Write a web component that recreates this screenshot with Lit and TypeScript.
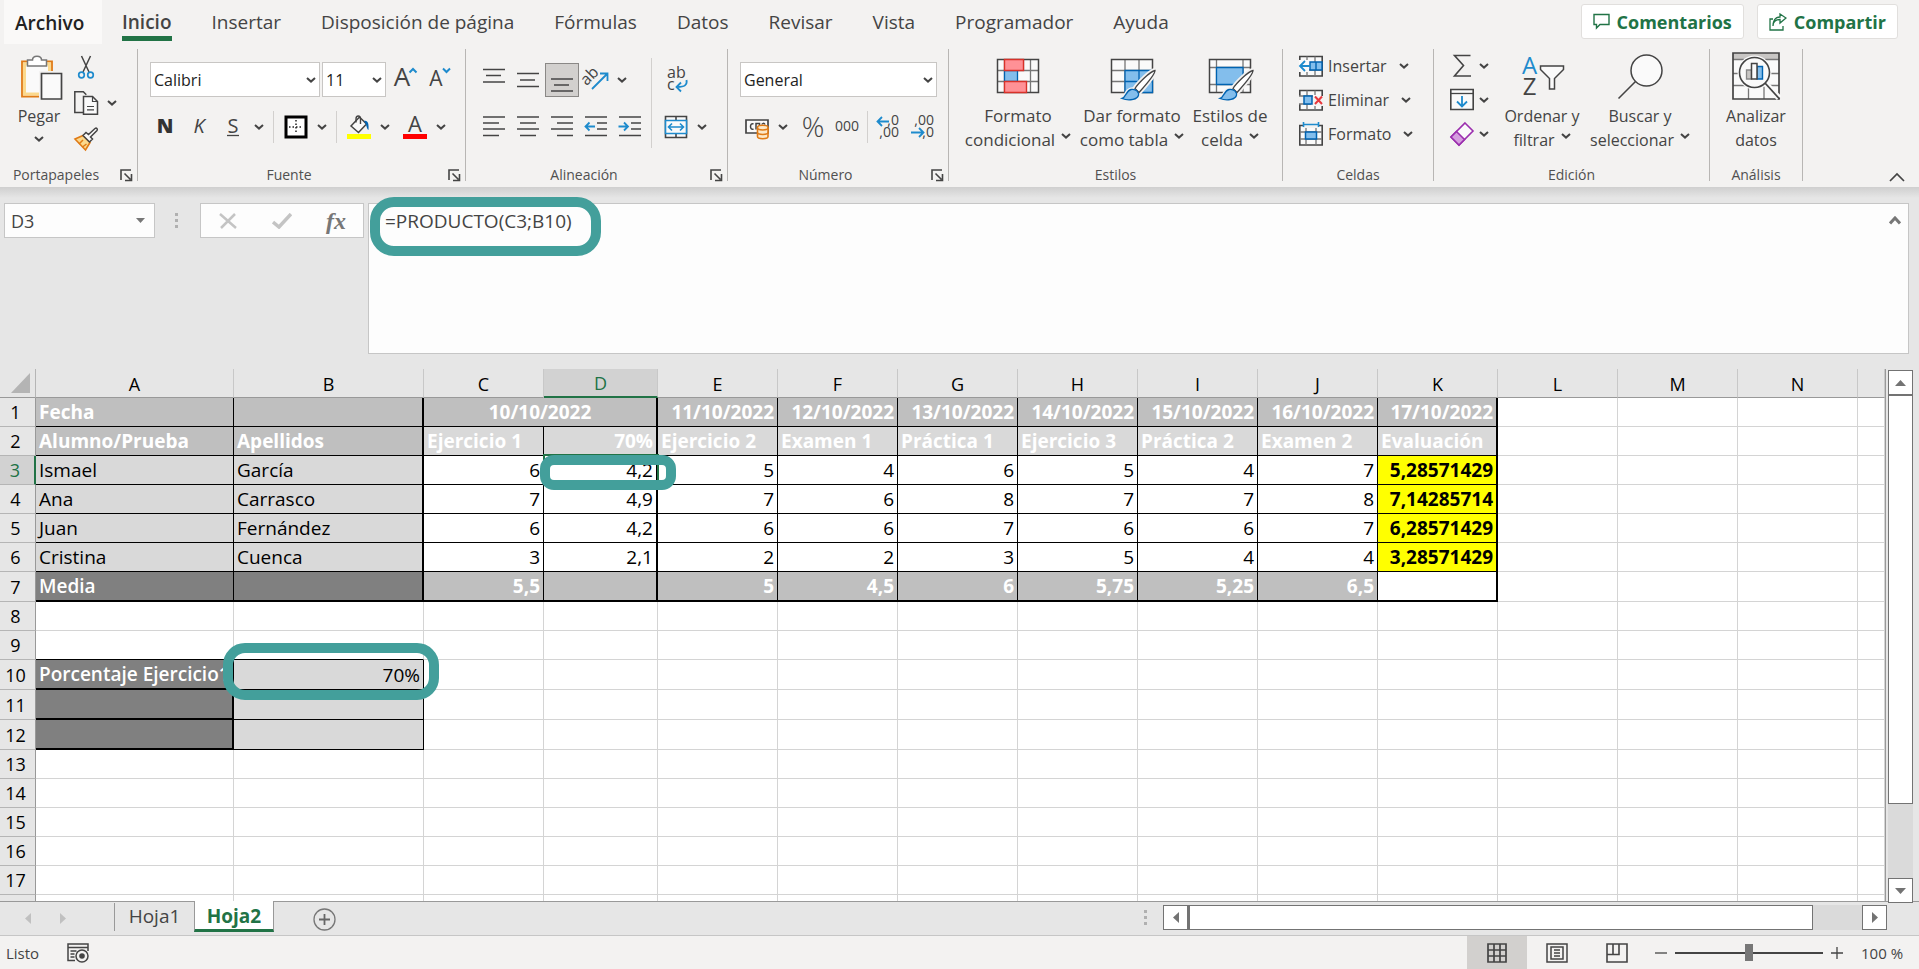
import { LitElement, html, svg, css, nothing } from "lit";
import { customElement, property, state } from "lit/decorators.js";
import { classMap } from "lit/directives/class-map.js";

const INK = "#444";
const BLUE = "#1e8bcd";

const chevron = html`<svg class="chev" width="10" height="6" viewBox="0 0 10 6" aria-hidden="true">
  <path d="M1 1l4 3.6L9 1" fill="none" stroke="#444" stroke-width="2" />
</svg>`;

const launcher = svg`<path d="M1 11V1h10M4.500 4.500l6 6M11.500 5v6.500H5" fill="none" stroke="#444" stroke-width="1.600"/>`;

const lines = (rows: [number, number, number][]) =>
  rows.map(([x1, x2, y]) => svg`<path d="M${x1} ${y}H${x2}" stroke=${INK} stroke-width="1.500"/>`);

const brush = svg`
  <path d="M47 18.500c-5 1-17 13-20 18l4 4C35 36 47 23 47 18.500z" fill="#fff" stroke="#f3f2f1" stroke-width="5"/>
  <path d="M14 46.500c4-1 4-8 9-9 5-1 9 3 7 7-3 4-11 4-16 2z" stroke="#f3f2f1" stroke-width="4"/>
  <path d="M47 18.500c-5 1-17 13-20 18l4 4C35 36 47 23 47 18.500z" fill="#fff" stroke="#444" stroke-width="1.300"/>
  <path d="M14 46.500c4-1 4-8 9-9 5-1 9 3 7 7-3 4-11 4-16 2z" fill="#83beec" stroke="#0063b1" stroke-width="1.300"/>`;

const big = {
  paste: svg`
    <path d="M7 9.500h30v35H7z" fill="#fff" stroke="#e07b16" stroke-width="1.800"/>
    <path d="M9.500 12h25v30h-25z" fill="#fafafa" stroke="#fbd98d" stroke-width="3"/>
    <path d="M12.500 14V8h5c0-5 9-5 9 0h5v6z" fill="#fff" stroke="#777" stroke-width="1.500"/>
    <path d="M24 19h24v30H24z" fill="#f3f2f1"/>
    <path d="M26.500 21.500h20v25.500h-20z" fill="#fafafa" stroke=${INK} stroke-width="1.700"/>`,
  conditional: svg`
    <path d="M3.500 7.500h41v33h-41z" fill="#fafafa"/>
    <path d="M3.500 18.500h41M3.500 29.500h41M10.500 7.500v33M36.500 7.500v33M29.500 7.500v11" stroke="#777" fill="none" stroke-width="1.300"/>
    <path d="M3.500 7.500h41v33h-41z" fill="none" stroke=${INK} stroke-width="1.500"/>
    <path d="M10.500 18.500h13v11h-13z" fill="#83beec" stroke="#0063b1" stroke-width="1.300"/>
    <path d="M10.500 7.500h19v11h-19zM10.500 29.500h22v11h-22z" fill="#ff9196" stroke="#d8322a" stroke-width="1.400"/>`,
  tableStyle: svg`
    <path d="M3.500 7.500h41v33h-41z" fill="#fafafa"/>
    <path d="M3.500 18.500h41M3.500 29.500h41M17 7.500v33M31 7.500v33" stroke="#777" fill="none" stroke-width="1.300"/>
    <path d="M3.500 7.500h41v33h-41z" fill="none" stroke=${INK} stroke-width="1.500"/>
    <path d="M17 18.500h27.500v22H17z" fill="#83beec" stroke="#0063b1" stroke-width="1.300"/>
    <path d="M31 18.500v22M17 29.500h27.500" stroke="#0063b1" stroke-width="1.300"/>
    ${brush}`,
  cellStyle: svg`
    <path d="M3.500 7.500h41v33h-41z" fill="#fafafa"/>
    <path d="M3.500 15.500h41M3.500 32.500h41M10.500 7.500v33M37 7.500v33" stroke="#777" fill="none" stroke-width="1.300"/>
    <path d="M3.500 7.500h41v33h-41z" fill="none" stroke=${INK} stroke-width="1.500"/>
    <path d="M10.500 15.500H37v17H10.500z" fill="#83beec" stroke="#0063b1" stroke-width="1.300"/>
    ${brush}`,
  sort: svg`
    <text x="11.500" y="22" font-size="24" text-anchor="middle" fill=${BLUE}>A</text>
    <text x="11.500" y="43" font-size="24" text-anchor="middle" fill="#444">Z</text>
    <path d="M22.500 14h23v3.500l-9 9V37h-5V26.500l-9-9z" fill="#fafafa" stroke=${INK} stroke-width="1.500"/>`,
  find: svg`
    <circle cx="30.500" cy="18.500" r="15.500" fill="#fafafa" stroke=${INK} stroke-width="1.500"/>
    <path d="M19.500 29.500L2.500 46.500" stroke=${INK} stroke-width="1.600"/>`,
  analyze: svg`
    <path d="M1 1h46v46H1z" fill="#fafafa"/>
    <path d="M1 1h46v6H1z" fill="#c8c6c4"/>
    <path d="M1 7.500h46M1 21.500h46M1 33.500h46M16.500 34v13M32 34v13" stroke="#777" fill="none" stroke-width="1.300"/>
    <path d="M1 1h46v46H1z" fill="none" stroke=${INK} stroke-width="1.700"/>
    <circle cx="22.500" cy="20.500" r="17" fill="#fafafa"/>
    <path d="M33 31l14 15" stroke="#fafafa" stroke-width="6"/>
    <circle cx="22.500" cy="20.500" r="15" fill="#fafafa" stroke=${INK} stroke-width="1.600"/>
    <path d="M33 31l14.500 16" stroke=${INK} stroke-width="1.800"/>
    <path d="M14.500 18h5v9h-5z" fill="#c8c6c4" stroke="#888" stroke-width="1.300"/>
    <path d="M25 14.500h5.500V27H25z" fill="#83beec" stroke="#0063b1" stroke-width="1.400"/>
    <path d="M19.500 11.500H25V27h-5.500z" fill="#fafafa" stroke=${INK} stroke-width="1.500"/>`,
};

/* Small glyphs are drawn on a 24 x 24 grid. */
const small = {
  cut: svg`<path d="M7.500 1l7.500 16M16.500 1L9 17" stroke=${INK} stroke-width="1.500"/>
    <circle cx="7.500" cy="20" r="2.800" fill="none" stroke=${BLUE} stroke-width="1.700"/>
    <circle cx="16.500" cy="20" r="2.800" fill="none" stroke=${BLUE} stroke-width="1.700"/>`,
  copy: svg`<path d="M9 21.500H.800V.800h8.500l3 3" fill="none" stroke=${INK} stroke-width="1.500"/>
    <path d="M9.500 5.500h9l5 5v12.700h-14z" fill="#fafafa" stroke=${INK} stroke-width="1.500"/>
    <path d="M18.500 5.500v5h5M13 15.500h7M13 18.800h7" fill="none" stroke=${INK} stroke-width="1.200"/>`,
  painter: svg`<path d="M1 12l8-3.500 7 7L11.500 23z" fill="#fbd98d" stroke="#e07b16" stroke-width="1.600"/>
    <path d="M5 17l4-4M8.500 20l4-3" stroke="#e07b16" stroke-width="1.500"/>
    <path d="M9 8.500L12 5.500l2.500 2L21 1.500c1.500-1 3 .500 2 2L16.500 10l2 2-3 3z" fill="#fafafa" stroke=${INK} stroke-width="1.500"/>`,
  grow: svg`<text x="9" y="18" font-size="26" text-anchor="middle" fill="#444">A</text>
    <path d="M16.500 4.500L20 1l3.500 3.500" fill="none" stroke=${BLUE} stroke-width="2"/>`,
  shrink: svg`<text x="9" y="18" font-size="21" text-anchor="middle" fill="#444">A</text>
    <path d="M16 .500L19.500 4 23 .500" fill="none" stroke=${BLUE} stroke-width="2"/>`,
  bold: svg`<text x="12" y="18" font-size="20" font-weight="800" text-anchor="middle" fill="#333">N</text>`,
  italic: svg`<text x="12" y="18" font-size="20" font-style="italic" text-anchor="middle" fill="#444">K</text>`,
  underline: svg`<text x="12" y="18" font-size="20" text-anchor="middle" fill="#444">S</text>
    <path d="M6 20.500h12" stroke=${INK} stroke-width="1.300"/>`,
  borders: svg`<path d="M2 2h20v20H2z" fill="#fff" stroke="#000" stroke-width="3"/>
    <path d="M12 5v14M5 12h14" stroke="#222" stroke-width="1.500" stroke-dasharray="1.500 2"/>`,
  fill: svg`<path d="M0 19h24v5H0z" fill="#ff0"/>
    <path d="M4 11l8.500-9 7 7-8 8.500z" fill="#fafafa" stroke=${INK} stroke-width="1.500"/>
    <path d="M9 7.500V4c0-4 4.500-4 4.500 0v5" fill="none" stroke=${INK} stroke-width="1.400"/>
    <path d="M17 6c4-1 5 3 4.500 9-2-1-1.500-5-4.500-9z" fill="#0063b1"/>`,
  fontColor: svg`<text x="12" y="17" font-size="22" text-anchor="middle" fill="#444">A</text>
    <path d="M0 19h24v5H0z" fill="#f00"/>`,
  top: svg`${lines([[1, 23, 1.500], [4, 19, 7.500], [1, 23, 14]])}`,
  middle: svg`${lines([[1, 23, 5.500], [4, 19, 12], [1, 23, 18.500]])}`,
  bottom: svg`${lines([[1, 23, 11], [4, 19, 17], [1, 23, 23]])}`,
  left: svg`${lines([[1, 23, 2], [1, 17, 8], [1, 23, 14], [1, 17, 20.500]])}`,
  center: svg`${lines([[1, 23, 2], [4, 20, 8], [1, 23, 14], [4, 20, 20.500]])}`,
  right: svg`${lines([[1, 23, 2], [7, 23, 8], [1, 23, 14], [7, 23, 20.500]])}`,
  outdent: svg`${lines([[1, 23, 2], [13, 23, 8], [13, 23, 14], [1, 23, 20.500]])}
    <path d="M11 11.500H2M5.500 7.500L1.500 11.500l4 4" fill="none" stroke=${BLUE} stroke-width="1.800"/>`,
  indent: svg`${lines([[1, 23, 2], [13, 23, 8], [13, 23, 14], [1, 23, 20.500]])}
    <path d="M.500 11.500h9M6 7.500l4 4-4 4" fill="none" stroke=${BLUE} stroke-width="1.800"/>`,
  orient: svg`<text x="0" y="16" font-size="16" fill="#444" transform="rotate(-45 4 14)">ab</text>
    <path d="M8 21L23 6M16 5.500h7.500V13" fill="none" stroke=${BLUE} stroke-width="1.800"/>`,
  wrap: svg`<text x="3" y="10" font-size="16" fill="#444">ab</text>
    <text x="3" y="22" font-size="16" fill="#444">c</text>
    <path d="M22.500 12c1 5-2 7-9 7M17 14.500L12.500 19l4.500 4.500" fill="none" stroke=${BLUE} stroke-width="1.800"/>`,
  merge: svg`<path d="M1.500 1.500h21v21h-21zM12 1.500v4M12 19v4" fill="#fafafa" stroke=${INK} stroke-width="1.600"/>
    <path d="M1.500 5.500h21v13h-21z" fill="#fafafa" stroke=${BLUE} stroke-width="1.600"/>
    <path d="M4.500 12h15M8 8.500L4.500 12 8 15.500M16 8.500l3.500 3.500-3.500 3.500" fill="none" stroke=${BLUE} stroke-width="1.600"/>`,
  currency: svg`<path d="M1 5h22v13H1z" fill="#fafafa" stroke=${INK} stroke-width="1.700"/>
    <path d="M8.500 9c-4-2-4 7 0 5M11 14.500V8.500h3.500V12M20 9.500c-1-2-3-1-3 0" fill="none" stroke=${INK} stroke-width="1.500"/>
    <path d="M12.500 12.500c0-3 10.500-3 10.500 0v9c0 3-10.500 3-10.500 0z" fill="#fde9c9" stroke="#e07b16" stroke-width="1.600"/>
    <path d="M12.500 13c0 2.500 10.500 2.500 10.500 0M12.500 17.500c0 2.500 10.500 2.500 10.500 0" fill="none" stroke="#e07b16" stroke-width="1.500"/>`,
  percent: svg`<text x="12" y="22" font-size="28" text-anchor="middle" fill="#444" font-weight="300">%</text>`,
  thousands: svg`<text x="12" y="16" font-size="14" text-anchor="middle" fill="#444">000</text>`,
  moreDec: svg`<text x="23" y="10" font-size="14" text-anchor="end" fill="#444">,0</text>
    <text x="23" y="22" font-size="14" text-anchor="end" fill="#444">,00</text>
    <path d="M13 6.500H1.500M6 2L1.500 6.500 6 11" fill="none" stroke=${BLUE} stroke-width="1.800"/>`,
  lessDec: svg`<text x="24" y="10" font-size="14" text-anchor="end" fill="#444">,00</text>
    <text x="24" y="22" font-size="14" text-anchor="end" fill="#444">,0</text>
    <path d="M1 17.500h12M9 13l4.500 4.500L9 22" fill="none" stroke=${BLUE} stroke-width="1.800"/>`,
  insert: svg`<path d="M.800 2.500h22.400v19.500H.800z" fill="#fafafa" stroke=${INK} stroke-width="1.600"/>
    <path d="M8 2.500V22M16 2.500V22M.800 16h22.400" stroke="#777" stroke-width="1.300"/>
    <path d="M11 8h12v8H11zM17 8v8" fill="#83beec" stroke="#0063b1" stroke-width="1.400"/>
    <path d="M0 6h10v12H0z" fill="#fafafa"/>
    <path d="M11.500 12H1.500M6 7l-5 5 5 5" fill="none" stroke=${BLUE} stroke-width="1.800"/>`,
  remove: svg`<path d="M.800 8V2.500h22.400V8M.800 16v6h22.400v-4" fill="#fafafa" stroke=${INK} stroke-width="1.600"/>
    <path d="M8 2.500V8M16 2.500V7M8 16v6M16 18v4M0 8h14M0 16h12" stroke="#777" stroke-width="1.300"/>
    <path d="M5 8h8v8H5z" fill="#83beec" stroke="#0063b1" stroke-width="1.500"/>
    <path d="M16 8.500l7 7.500M23 8.500L16 16" stroke="#e8383d" stroke-width="2"/>`,
  format: svg`<path d="M.800 3.500h22.400V23H.800z" fill="#fafafa" stroke=${INK} stroke-width="1.600"/>
    <path d="M7 4v19M17 4v19M1 10h22M1 17h22" stroke="#777" stroke-width="1.300"/>
    <path d="M4 0h16v6H4z" fill="#f3f2f1"/>
    <path d="M6.500 10h11v7h-11z" fill="#83beec" stroke="#0063b1" stroke-width="1.500"/>
    <path d="M4.500 2.500h15M4.500 0v5M19.500 0v5" stroke=${BLUE} stroke-width="1.600"/>`,
  sum: svg`<path d="M20.500 1.500H4.500l9 10-9 10.500h16.500" fill="none" stroke=${INK} stroke-width="1.600"/>`,
  fillDown: svg`<path d="M.800 1.500h22.400v20H.800z" fill="#fafafa" stroke=${INK} stroke-width="1.600"/>
    <path d="M.800 5.500h22.400" stroke=${INK} stroke-width="1.300"/>
    <path d="M12 8v10M7 13.500l5 5 5-5" fill="none" stroke=${BLUE} stroke-width="1.800"/>`,
  erase: svg`<path d="M15 1l8 8L9 23l-8-8z" fill="#fafafa" stroke="#9b2fae" stroke-width="1.600"/>
    <path d="M6.500 9.500l8 8L9 23l-8-8z" fill="#d59ddf" stroke="#9b2fae" stroke-width="1.600"/>`,
};

type SmallName = keyof typeof small;
type BigName = keyof typeof big;

const ico = (n: SmallName) =>
  html`<svg width="24" height="24" viewBox="0 0 24 24" aria-hidden="true" overflow="visible">${small[n]}</svg>`;
const tool = (n: SmallName, label: string, on = false) =>
  html`<button class=${classMap({ tool: true, on })} aria-label=${label}>${ico(n)}</button>`;
const drop = (label: string) => html`<button class="drop" aria-label=${label}>${chevron}</button>`;
const sep = html`<span class="sep"></span>`;
const bigTool = (n: BigName, a: string, b: string, arrow: boolean, size: string) => html`
  <button class="big ${size}">
    <svg width="48" height="48" viewBox="0 0 48 48" aria-hidden="true" overflow="visible">${big[n]}</svg>
    <span>${a}</span><span>${b}${arrow ? chevron : nothing}</span>
  </button>`;

@customElement("ribbon-group")
class RibbonGroup extends LitElement {
  @property() label = "";
  @property({ type: Boolean }) launch = false;
  static styles = css`
    :host { display: flex; flex-direction: column; flex: none; height: 132px; box-sizing: border-box; border-right: 1px solid #b8b6b4; }
    .body { flex: 1; display: flex; min-height: 0; }
    .foot { display: flex; height: 12px; line-height: 12px; font-size: 14px; color: #505050; align-items: center; }
    .name { flex: 1; text-align: center; }
    button { border: 0; padding: 0; background: none; width: 13px; height: 12px; margin: 0 4px 0 8px; display: grid; }
  `;
  render() {
    return html`<div class="body"><slot></slot></div>
      <div class="foot">
        <span class="name">${this.label}</span>
        ${this.launch
          ? html`<button aria-label="Opciones de ${this.label}"><svg width="13" height="13" viewBox="0 0 13 13">${launcher}</svg></button>`
          : nothing}
      </div>`;
  }
}

const COLS = "ABCDEFGHIJKLMN".split("");
const HEAD_DATES = ["11/10/2022", "12/10/2022", "13/10/2022", "14/10/2022", "15/10/2022", "16/10/2022", "17/10/2022"];
const TITLES = ["Ejercicio 1", "70%", "Ejercicio 2", "Examen 1", "Práctica 1", "Ejercicio 3", "Práctica 2", "Examen 2", "Evaluación"];
const PUPILS = [
  ["Ismael", "García", "6", "4,2", "5", "4", "6", "5", "4", "7", "5,28571429"],
  ["Ana", "Carrasco", "7", "4,9", "7", "6", "8", "7", "7", "8", "7,14285714"],
  ["Juan", "Fernández", "6", "4,2", "6", "6", "7", "6", "6", "7", "6,28571429"],
  ["Cristina", "Cuenca", "3", "2,1", "2", "2", "3", "5", "4", "4", "3,28571429"],
];
const MEANS = ["5,5", "", "5", "4,5", "6", "5,75", "5,25", "6,5"];

@customElement("sheet-grid")
class SheetGrid extends LitElement {
  static styles = css`
    :host { display: block; position: relative; overflow: hidden; background: #fff; border-right: 1px solid #999; box-sizing: border-box; }
    table { width: 100%; table-layout: fixed; border-collapse: separate; border-spacing: 0; font: 19px/26px "Open Sans", "Noto Sans", sans-serif; color: #000; }
    col.n { width: 36px; } col.a { width: 198px; } col.b { width: 190px; } col.d { width: 114px; } col.w { width: 120px; }
    tr { height: 29px; }
    tr.tall { height: 30px; }
    th, td { box-sizing: border-box; padding: 0 3px; border-right: 1px solid #d4d4d4; border-bottom: 1px solid #d4d4d4; white-space: nowrap; overflow: hidden; text-align: left; font-weight: 400; }
    thead th, tbody th { background: #e6e6e6; text-align: center; font-size: 18px; }
    thead th { border-color: #c8c8c8; border-bottom-color: #999; padding-top: 1px; }
    tbody th { border-right-color: #999; border-bottom-color: #b5b5b5; padding: 0 4px 0 0; }
    thead th.sel { background: #d2d2d2; color: #217346; border-bottom: 2px solid #217346; padding-top: 0; }
    tbody th.sel { background: #d2d2d2; color: #217346; border-right: 2px solid #217346; }
    .corner { border-right-color: #b5b5b5; padding: 0; }
    .corner svg { display: block; margin-left: 11px; }
    td.k { border-color: #000; }
    .r { text-align: right; }
    .c { text-align: center; }
    td.bold { font-weight: 700; }
    td.bold.g3 { font-weight: 600; }
    .w { color: #fff; }
    .g1 { background: #bfbfbf; } .g2 { background: #d9d9d9; } .g3 { background: #808080; }
    .y { background: #ff0; }
    td.tr { border-right-width: 2px; }
    td.tb { border-bottom-width: 2px; }
    td.topk { border-bottom-color: #000; }
    .mark { position: absolute; box-sizing: border-box; border: 10px solid #439f9b; pointer-events: none; }
    .cell { left: 540px; top: 86px; width: 136px; height: 35px; border-radius: 14px; }
    .percent { left: 223px; top: 274px; width: 216px; height: 57px; border-radius: 22px; }
    .active { position: absolute; box-sizing: border-box; left: 543px; top: 85px; width: 116px; height: 31px; border: 2px solid #217346; pointer-events: none; }
  `;

  blanks(n: number) {
    return Array.from({ length: n }, () => html`<td></td>`);
  }

  render() {
    return html`
      <table>
        <colgroup>
          <col class="n" /><col class="a" /><col class="b" /><col class="w" /><col class="d" />
          ${COLS.slice(4).map(() => html`<col class="w" />`)}<col />
        </colgroup>
        <thead>
          <tr>
            <th class="corner" aria-label="Seleccionar todo"><svg width="20" height="20" viewBox="0 0 20 20"><path d="M19 0v20H0z" fill="#b4b4b4" /></svg></th>
            ${COLS.map((c) => html`<th scope="col" class=${c === "D" ? "sel" : ""}>${c}</th>`)}
            <th></th>
          </tr>
        </thead>
        <tbody>
          <tr>
            <th scope="row">1</th>
            <td class="k g1 w bold">Fecha</td><td class="k g1 tr"></td>
            <td class="k g1 w bold c tr" colspan="2">10/10/2022</td>
            ${HEAD_DATES.map((d, i) => html`<td class="k g1 w bold r ${i === 6 ? "tr" : ""}">${d}</td>`)}
            ${this.blanks(4)}
          </tr>
          <tr>
            <th scope="row">2</th>
            <td class="k g1 w bold">Alumno/Prueba</td><td class="k g1 w bold tr">Apellidos</td>
            ${TITLES.map((t, i) => html`<td class="k g2 w bold ${i === 1 ? "r tr" : ""} ${i === 8 ? "tr" : ""}">${t}</td>`)}
            ${this.blanks(4)}
          </tr>
          ${PUPILS.map((row, n) => html`<tr>
            <th scope="row" class=${n === 0 ? "sel" : ""}>${n + 3}</th>
            ${row.map((v, i) => html`<td class=${classMap({ k: true, g2: i < 2, r: i > 1, tr: i === 1 || i === 3 || i === 10, y: i === 10, bold: i === 10 })}>${v}</td>`)}
            ${this.blanks(4)}
          </tr>`)}
          <tr class="tall">
            <th scope="row">7</th>
            <td class="k g3 w bold tb">Media</td><td class="k g3 tr tb"></td>
            ${MEANS.map((v, i) => html`<td class="k g1 w bold r tb ${i === 1 ? "tr" : ""}">${v}</td>`)}
            <td class="k tr tb"></td>
            ${this.blanks(4)}
          </tr>
          <tr><th scope="row">8</th>${this.blanks(15)}</tr>
          <tr><th scope="row">9</th><td class="topk"></td><td class="topk"></td>${this.blanks(13)}</tr>
          <tr class="tall"><th scope="row">10</th><td class="k g3 w bold tr tb">Porcentaje Ejercicio1</td><td class="k g2 r">70%</td>${this.blanks(13)}</tr>
          <tr class="tall"><th scope="row">11</th><td class="k g3 tr tb"></td><td class="k g2"></td>${this.blanks(13)}</tr>
          <tr class="tall"><th scope="row">12</th><td class="k g3 tr tb"></td><td class="k g2"></td>${this.blanks(13)}</tr>
          ${[13, 14, 15, 16, 17].map((n) => html`<tr><th scope="row">${n}</th>${this.blanks(15)}</tr>`)}
          <tr><th scope="row"></th>${this.blanks(15)}</tr>
        </tbody>
      </table>
      <div class="active"></div>
      <div class="mark cell"></div>
      <div class="mark percent"></div>
    `;
  }
}

@customElement("app-root")
class AppRoot extends LitElement {
  @state() tab = "Inicio";

  static styles = css`
    :host { display: flex; flex-direction: column; height: 100vh; overflow: hidden; background: #e6e6e6; color: #444; font-family: "Open Sans", "Noto Sans", sans-serif; font-size: 16px; }
    button, select, input, textarea { font: inherit; color: inherit; border: 0; padding: 0; margin: 0; background: none; border-radius: 0; outline: 0; }
    svg { display: block; flex: none; }
    .tabs { display: flex; height: 45px; flex: none; background: #f3f2f1; font-size: 19px; padding: 0 21px 0 4px; }
    .tabs nav { display: flex; flex: 1; gap: 40px; height: 44px; }
    .tab { line-height: 26px; padding: 9px 0 3px; height: 41px; box-sizing: border-box; border-bottom: 5px solid transparent; white-space: nowrap; }
    .tab.cur { font-weight: 600; border-color: #217346; }
    .tab.file { background: #faf9f8; color: #222; font-weight: 600; width: 98px; height: 44px; margin-right: -20px; padding-left: 11px; text-align: left; }
    .actions { display: flex; gap: 13px; padding-top: 4px; font-size: 18px; }
    .action { height: 35px; box-sizing: border-box; background: #fff; border: 1px solid #e1dfdd; border-radius: 3px; color: #217346; font-weight: 700; display: flex; align-items: center; gap: 7px; padding: 0 11px; }
    .ribbon { display: flex; flex: none; height: 142px; box-sizing: border-box; padding-top: 4px; background: #f3f2f1; }
    .w1 { width: 138px; } .w2 { width: 328px; } .w3 { width: 262px; } .w4 { width: 221px; }
    .w5 { width: 334px; font-size: 17px; } .w6 { width: 151px; } .w7 { width: 276px; } .w8 { width: 93px; }
    .collapse { margin: 118px 14px 0 auto; height: 20px; }
    .tool { width: 34px; height: 34px; display: grid; place-items: center; box-sizing: border-box; }
    .tool.on { background: #d2d0ce; border: 1px solid #8a8886; }
    .drop { width: 18px; height: 34px; display: grid; place-items: center; }
    .sep { width: 1px; height: 32px; background: #d2d0ce; margin: 0 5px; }
    .sep.long { height: 90px; margin: 9px 7px 0 4px; }
    .sep.slim { margin: 0 3px; }
    .rows { display: flex; flex-direction: column; gap: 12px; padding-top: 13px; }
    .rows.in { padding-left: 12px; }
    .rows.al { padding-left: 11px; }
    .row { display: flex; align-items: center; height: 35px; }
    .row.fonts { gap: 2px; }
    .row.fonts .tool + .tool { margin-left: -2px; }
    .row.font2 { margin-left: -2px; }
    .pair { display: flex; margin-right: 4px; }
    .pick { display: grid; align-items: center; height: 35px; box-sizing: border-box; border: 1px solid #c8c6c4; background: #fff; color: #222; }
    .pick select { grid-area: 1 / 1; appearance: none; height: 33px; padding-left: 3px; width: 100%; }
    .pick .chev { grid-area: 1 / 1; justify-self: end; margin-right: 3px; pointer-events: none; }
    .family { width: 170px; } .size { width: 64px; } .numfmt { width: 197px; }
    .big { display: flex; flex-direction: column; align-items: center; line-height: 24px; padding-top: 3px; white-space: nowrap; justify-content: flex-start; }
    .big svg:first-child { margin-bottom: 4px; }
    .big .chev { display: inline-block; margin-left: 6px; vertical-align: 3px; }
    .s56 > .chev { margin: 8px 0 0; }
    .s56 { width: 56px; margin-left: 11px; } .s110 { width: 110px; } .s86 { width: 86px; } .s88 { width: 88px; margin-left: 9px; } .s108 { width: 108px; } .s92 { width: 92px; }
    .clip { display: flex; flex-direction: column; padding-left: 7px; }
    .clip div { display: flex; align-items: center; height: 36px; }
    .clip .tool { width: 24px; }
    .clip .drop { margin-left: 5px; }
    .styles { display: flex; padding-left: 14px; gap: 4px; }
    .styles .s86 { margin-left: -4px; }
    .stack { display: flex; flex-direction: column; padding-left: 16px; }
    .stack .line { display: flex; align-items: center; height: 34px; gap: 5px; }
    .stack .line .drop { width: 20px; margin-left: 2px; }
    .formula { display: flex; flex: none; height: 182px; box-sizing: border-box; padding: 16px 10px 15px 4px; background: linear-gradient(#cfcfcf, #e6e6e6 11px); position: relative; font-size: 19px; }
    .name { display: flex; align-items: center; width: 151px; height: 35px; box-sizing: border-box; background: #fdfdfd; border: 1px solid #c6c6c6; padding-right: 9px; }
    .name input { flex: 1; width: 60px; padding-left: 6px; font-size: 18px; }
    .grip { width: 3px; height: 16px; margin: 10px 22px 0 20px; background: repeating-linear-gradient(#b0b0b0 0 3px, transparent 3px 6px); }
    .fx { display: flex; width: 164px; height: 35px; box-sizing: border-box; background: #fdfdfd; border: 1px solid #c6c6c6; margin-right: 4px; justify-content: space-around; align-items: center; }
    .fx button { width: 50px; height: 33px; display: grid; place-items: center; }
    .fx .fn { font: italic 700 24px/30px "Liberation Serif", serif; color: #777; }
    .entry { display: flex; flex: 1; background: #fdfdfd; border: 1px solid #c6c6c6; box-sizing: border-box; }
    .entry textarea { flex: 1; resize: none; padding: 4px 16px; line-height: 26px; }
    .entry button { width: 26px; height: 33px; display: grid; place-items: center; }
    .mark { position: absolute; left: 370px; top: 10px; width: 231px; height: 59px; box-sizing: border-box; border: 10px solid #439f9b; border-radius: 24px; pointer-events: none; }
    .sheet { display: flex; flex: 1; min-height: 0; }
    sheet-grid { flex: 1; min-width: 0; }
    .vbar { display: flex; flex-direction: column; width: 25px; margin: 1px 6px -2px 2px; background: #dadada; z-index: 1; }
    .arrow { width: 25px; height: 25px; box-sizing: border-box; background: #fff; border: 1px solid #737373; display: grid; place-items: center; flex: none; }
    .vthumb { flex: 410 0 0; background: #fff; border: 1px solid #737373; }
    .vrest { flex: 74 0 0; }
    .sheets { display: flex; flex: none; height: 34px; box-sizing: border-box; border-top: 1px solid #999; font-size: 19px; padding-right: 32px; }
    .nav { display: flex; width: 114px; box-sizing: border-box; padding-left: 18px; }
    .nav button { width: 35px; height: 32px; display: grid; place-items: center; padding-right: 16px; }
    .hoja { width: 80px; height: 31px; box-sizing: border-box; line-height: 26px; }
    .first { border-left: 1px solid #999; margin-top: 1px; height: 28px; padding-bottom: 2px; }
    .second { margin-top: -1px; background: #fff; border: 1px solid #999; border-top: 0; border-bottom: 3px solid #217346; color: #217346; font-weight: 700; padding-top: 2px; }
    .add { margin: 5px 0 0 39px; height: 24px; }
    .hbar { display: flex; margin: 3px 0 0 auto; height: 25px; flex: 0 0 750px; }
    .hbar .grip { margin: 5px 16px 0 7px; }
    .htrack { flex: 1; display: flex; background: #dadada; }
    .hthumb { flex: 624 0 0; background: #fff; border: 1px solid #737373; border-left-width: 2px; box-sizing: border-box; }
    .hrest { flex: 49 0 0; }
    .status { display: flex; flex: none; height: 34px; box-sizing: border-box; border-top: 1px solid #c6c6c6; background: #f3f2f1; font-size: 15px; align-items: center; padding-left: 6px; padding-right: 14px; }
    .status .txt { margin-right: 28px; }
    .view { width: 60px; height: 33px; display: grid; place-items: center; }
    .view.on { background: #d2d0ce; }
    .push { margin-left: auto; }
    .zoom { display: flex; align-items: center; gap: 8px; padding-left: 8px; }
    .zoom button { height: 20px; }
    input[type="range"] { appearance: none; width: 148px; height: 18px; background: linear-gradient(#444, #444) center / 100% 2px no-repeat; }
    input[type="range"]::-webkit-slider-thumb { appearance: none; width: 8px; height: 17px; background: #777; }
    .pct { margin-left: 18px; width: 44px; white-space: nowrap; }
  `;

  renderRibbon() {
    return html`
      <div class="ribbon">
        <ribbon-group class="w1" label="Portapapeles" launch>
          <button class="big s56">
            <svg width="48" height="48" viewBox="0 0 48 48" aria-hidden="true">${big.paste}</svg>
            <span>Pegar</span>${chevron}
          </button>
          <div class="clip">
            <div>${tool("cut", "Cortar")}</div>
            <div>${tool("copy", "Copiar")}${drop("Opciones de copia")}</div>
            <div>${tool("painter", "Copiar formato")}</div>
          </div>
        </ribbon-group>
        <ribbon-group class="w2" label="Fuente" launch>
          <div class="rows in">
            <div class="row fonts">
              <label class="pick family"><select aria-label="Fuente"><option>Calibri</option></select>${chevron}</label>
              <label class="pick size"><select aria-label="Tamaño"><option>11</option></select>${chevron}</label>
              ${tool("grow", "Aumentar tamaño")}${tool("shrink", "Disminuir tamaño")}
            </div>
            <div class="row font2">
              ${tool("bold", "Negrita")}${tool("italic", "Cursiva")}${tool("underline", "Subrayado")}${drop("Tipo de subrayado")}${sep}
              ${tool("borders", "Bordes")}${drop("Tipo de borde")}${sep}
              <span class="pair">${tool("fill", "Relleno")}${drop("Color de relleno")}</span>
              ${tool("fontColor", "Color de fuente")}${drop("Más colores")}
            </div>
          </div>
        </ribbon-group>
        <ribbon-group class="w3" label="Alineación" launch>
          <div class="rows al">
            <div class="row">
              ${tool("top", "Alinear arriba")}${tool("middle", "Alinear en medio")}${tool("bottom", "Alinear abajo", true)}
              ${tool("orient", "Orientación")}${drop("Más orientaciones")}
            </div>
            <div class="row">
              ${tool("left", "Izquierda")}${tool("center", "Centrar")}${tool("right", "Derecha")}${tool("outdent", "Disminuir sangría")}${tool("indent", "Aumentar sangría")}
            </div>
          </div>
          <span class="sep long"></span>
          <div class="rows">
            <div class="row">${tool("wrap", "Ajustar texto")}</div>
            <div class="row">${tool("merge", "Combinar y centrar")}${drop("Opciones de combinar")}</div>
          </div>
        </ribbon-group>
        <ribbon-group class="w4" label="Número" launch>
          <div class="rows in">
            <div class="row"><label class="pick numfmt"><select aria-label="Formato de número"><option>General</option></select>${chevron}</label></div>
            <div class="row">
              <span class="pair">${tool("currency", "Moneda")}${drop("Más monedas")}</span>${tool("percent", "Porcentaje")}${tool("thousands", "Millares")}
              <span class="sep slim"></span>
              ${tool("moreDec", "Aumentar decimales")}${tool("lessDec", "Disminuir decimales")}
            </div>
          </div>
        </ribbon-group>
        <ribbon-group class="w5" label="Estilos">
          <div class="styles">
            ${bigTool("conditional", "Formato", "condicional", true, "s110")}
            ${bigTool("tableStyle", "Dar formato", "como tabla", true, "s110")}
            ${bigTool("cellStyle", "Estilos de", "celda", true, "s86")}
          </div>
        </ribbon-group>
        <ribbon-group class="w6" label="Celdas">
          <div class="stack">
            <button class="line">${ico("insert")}Insertar<span class="drop">${chevron}</span></button>
            <button class="line">${ico("remove")}Eliminar<span class="drop">${chevron}</span></button>
            <button class="line">${ico("format")}Formato<span class="drop">${chevron}</span></button>
          </div>
        </ribbon-group>
        <ribbon-group class="w7" label="Edición">
          <div class="stack">
            <button class="line" aria-label="Autosuma">${ico("sum")}${chevron}</button>
            <button class="line" aria-label="Rellenar">${ico("fillDown")}${chevron}</button>
            <button class="line" aria-label="Borrar">${ico("erase")}${chevron}</button>
          </div>
          ${bigTool("sort", "Ordenar y", "filtrar", true, "s88")}
          ${bigTool("find", "Buscar y", "seleccionar", true, "s108")}
        </ribbon-group>
        <ribbon-group class="w8" label="Análisis">
          ${bigTool("analyze", "Analizar", "datos", false, "s92")}
        </ribbon-group>
        <button class="collapse" aria-label="Contraer la cinta">
          <svg width="16" height="10" viewBox="0 0 16 10"><path d="M1 9l7-7 7 7" fill="none" stroke="#444" stroke-width="1.700" /></svg>
        </button>
      </div>
    `;
  }

  render() {
    const tabs = ["Inicio", "Insertar", "Disposición de página", "Fórmulas", "Datos", "Revisar", "Vista", "Programador", "Ayuda"];
    return html`
      <header class="tabs">
        <nav>
          <button class="tab file">Archivo</button>
          ${tabs.map((t) => html`<button class=${classMap({ tab: true, cur: t === this.tab })} @click=${() => (this.tab = t)}>${t}</button>`)}
        </nav>
        <div class="actions">
          <button class="action">
            <svg width="17" height="17" viewBox="0 0 17 17"><path d="M1 1.500h15v10H7l-3.500 3.500v-3.500H1z" fill="none" stroke="#217346" stroke-width="1.400" /></svg>Comentarios
          </button>
          <button class="action">
            <svg width="18" height="18" viewBox="0 0 18 18"><path d="M4 6H1v11h13v-4M4 13c0-5 3-6.500 7-6.500V10l6-5-6-4v3C6 4 4 8 4 13z" fill="none" stroke="#217346" stroke-width="1.300" /></svg>Compartir
          </button>
        </div>
      </header>
      ${this.renderRibbon()}
      <section class="formula">
        <div class="name">
          <input aria-label="Cuadro de nombres" .value=${"D3"} />
          <svg width="9" height="5" viewBox="0 0 9 5"><path d="M0 0h9L4.500 5z" fill="#777" /></svg>
        </div>
        <span class="grip"></span>
        <div class="fx">
          <button aria-label="Cancelar"><svg width="18" height="16" viewBox="0 0 18 16"><path d="M1 1l16 14M16 1L2 15" stroke="#c4c4c4" stroke-width="2.500" /></svg></button>
          <button aria-label="Introducir"><svg width="20" height="16" viewBox="0 0 20 16"><path d="M1 9l6 5L19 1" fill="none" stroke="#c4c4c4" stroke-width="3.500" /></svg></button>
          <button class="fn" aria-label="Insertar función">fx</button>
        </div>
        <div class="entry">
          <textarea aria-label="Barra de fórmulas" spellcheck="false" .value=${"=PRODUCTO(C3;B10)"}></textarea>
          <button aria-label="Contraer"><svg width="12" height="9" viewBox="0 0 12 9"><path d="M1 7.500L6 2l5 5.500" fill="none" stroke="#777" stroke-width="3" /></svg></button>
        </div>
        <div class="mark"></div>
      </section>
      <main class="sheet">
        <sheet-grid></sheet-grid>
        <div class="vbar">
          <button class="arrow" aria-label="Subir"><svg width="11" height="6" viewBox="0 0 11 6"><path d="M0 6h11L5.500 0z" fill="#737373" /></svg></button>
          <div class="vthumb"></div><div class="vrest"></div>
          <button class="arrow" aria-label="Bajar"><svg width="11" height="6" viewBox="0 0 11 6"><path d="M0 0h11L5.500 6z" fill="#737373" /></svg></button>
        </div>
      </main>
      <div class="sheets">
        <div class="nav">
          <button aria-label="Hoja anterior"><svg width="6" height="11" viewBox="0 0 6 11"><path d="M6 0v11L0 5.500z" fill="#c0c0c0" /></svg></button>
          <button aria-label="Hoja siguiente"><svg width="6" height="11" viewBox="0 0 6 11"><path d="M0 0v11l6-5.500z" fill="#c0c0c0" /></svg></button>
        </div>
        <button class="hoja first">Hoja1</button>
        <button class="hoja second">Hoja2</button>
        <button class="add" aria-label="Hoja nueva"><svg width="23" height="23" viewBox="0 0 23 23"><circle cx="11.500" cy="11.500" r="10.500" fill="none" stroke="#777" stroke-width="1.300" /><path d="M6 11.500h11M11.500 6v11" stroke="#666" stroke-width="1.800" /></svg></button>
        <div class="hbar">
          <span class="grip"></span>
          <button class="arrow" aria-label="Izquierda"><svg width="6" height="11" viewBox="0 0 6 11"><path d="M6 0v11L0 5.500z" fill="#737373" /></svg></button>
          <div class="htrack"><div class="hthumb"></div><div class="hrest"></div></div>
          <button class="arrow" aria-label="Derecha"><svg width="6" height="11" viewBox="0 0 6 11"><path d="M0 0v11l6-5.500z" fill="#737373" /></svg></button>
        </div>
      </div>
      <footer class="status">
        <span class="txt">Listo</span>
        <button aria-label="Grabar macro">
          <svg width="22" height="20" viewBox="0 0 22 20"><path d="M8 17.500H1V1h20v7M1 4.500h20M3.500 8h6M3.500 11h4M3.500 14h4" fill="none" stroke="#444" stroke-width="1.500" /><circle cx="15" cy="13" r="6" fill="#f3f2f1" stroke="#444" stroke-width="1.500" /><circle cx="15" cy="13" r="2.800" fill="#444" /></svg>
        </button>
        <button class="view on push" aria-label="Normal">
          <svg width="20" height="20" viewBox="0 0 20 20"><path d="M1 1h18v18H1zM7 1v18M13 1v18M1 7h18M1 13h18" fill="none" stroke="#444" stroke-width="1.700" /></svg>
        </button>
        <button class="view" aria-label="Diseño de página">
          <svg width="22" height="20" viewBox="0 0 22 20"><path d="M1 1h20v18H1zM5 4h12v12H5zM8 7h6M8 10h6M8 13h6" fill="none" stroke="#444" stroke-width="1.500" /></svg>
        </button>
        <button class="view" aria-label="Salto de página">
          <svg width="22" height="20" viewBox="0 0 22 20"><path d="M1 1h20v18H1zM1 11.500h12V1M7 1v10.500" fill="none" stroke="#444" stroke-width="1.600" /></svg>
        </button>
        <div class="zoom">
          <button aria-label="Alejar"><svg width="12" height="20" viewBox="0 0 12 20"><path d="M0 10h12" stroke="#444" stroke-width="1.300" /></svg></button>
          <input type="range" aria-label="Zoom" min="0" max="200" .value=${"100"} />
          <button aria-label="Acercar"><svg width="12" height="20" viewBox="0 0 12 20"><path d="M0 10h12M6 4v12" stroke="#444" stroke-width="1.300" /></svg></button>
        </div>
        <span class="pct">100 %</span>
      </footer>
    `;
  }
}
